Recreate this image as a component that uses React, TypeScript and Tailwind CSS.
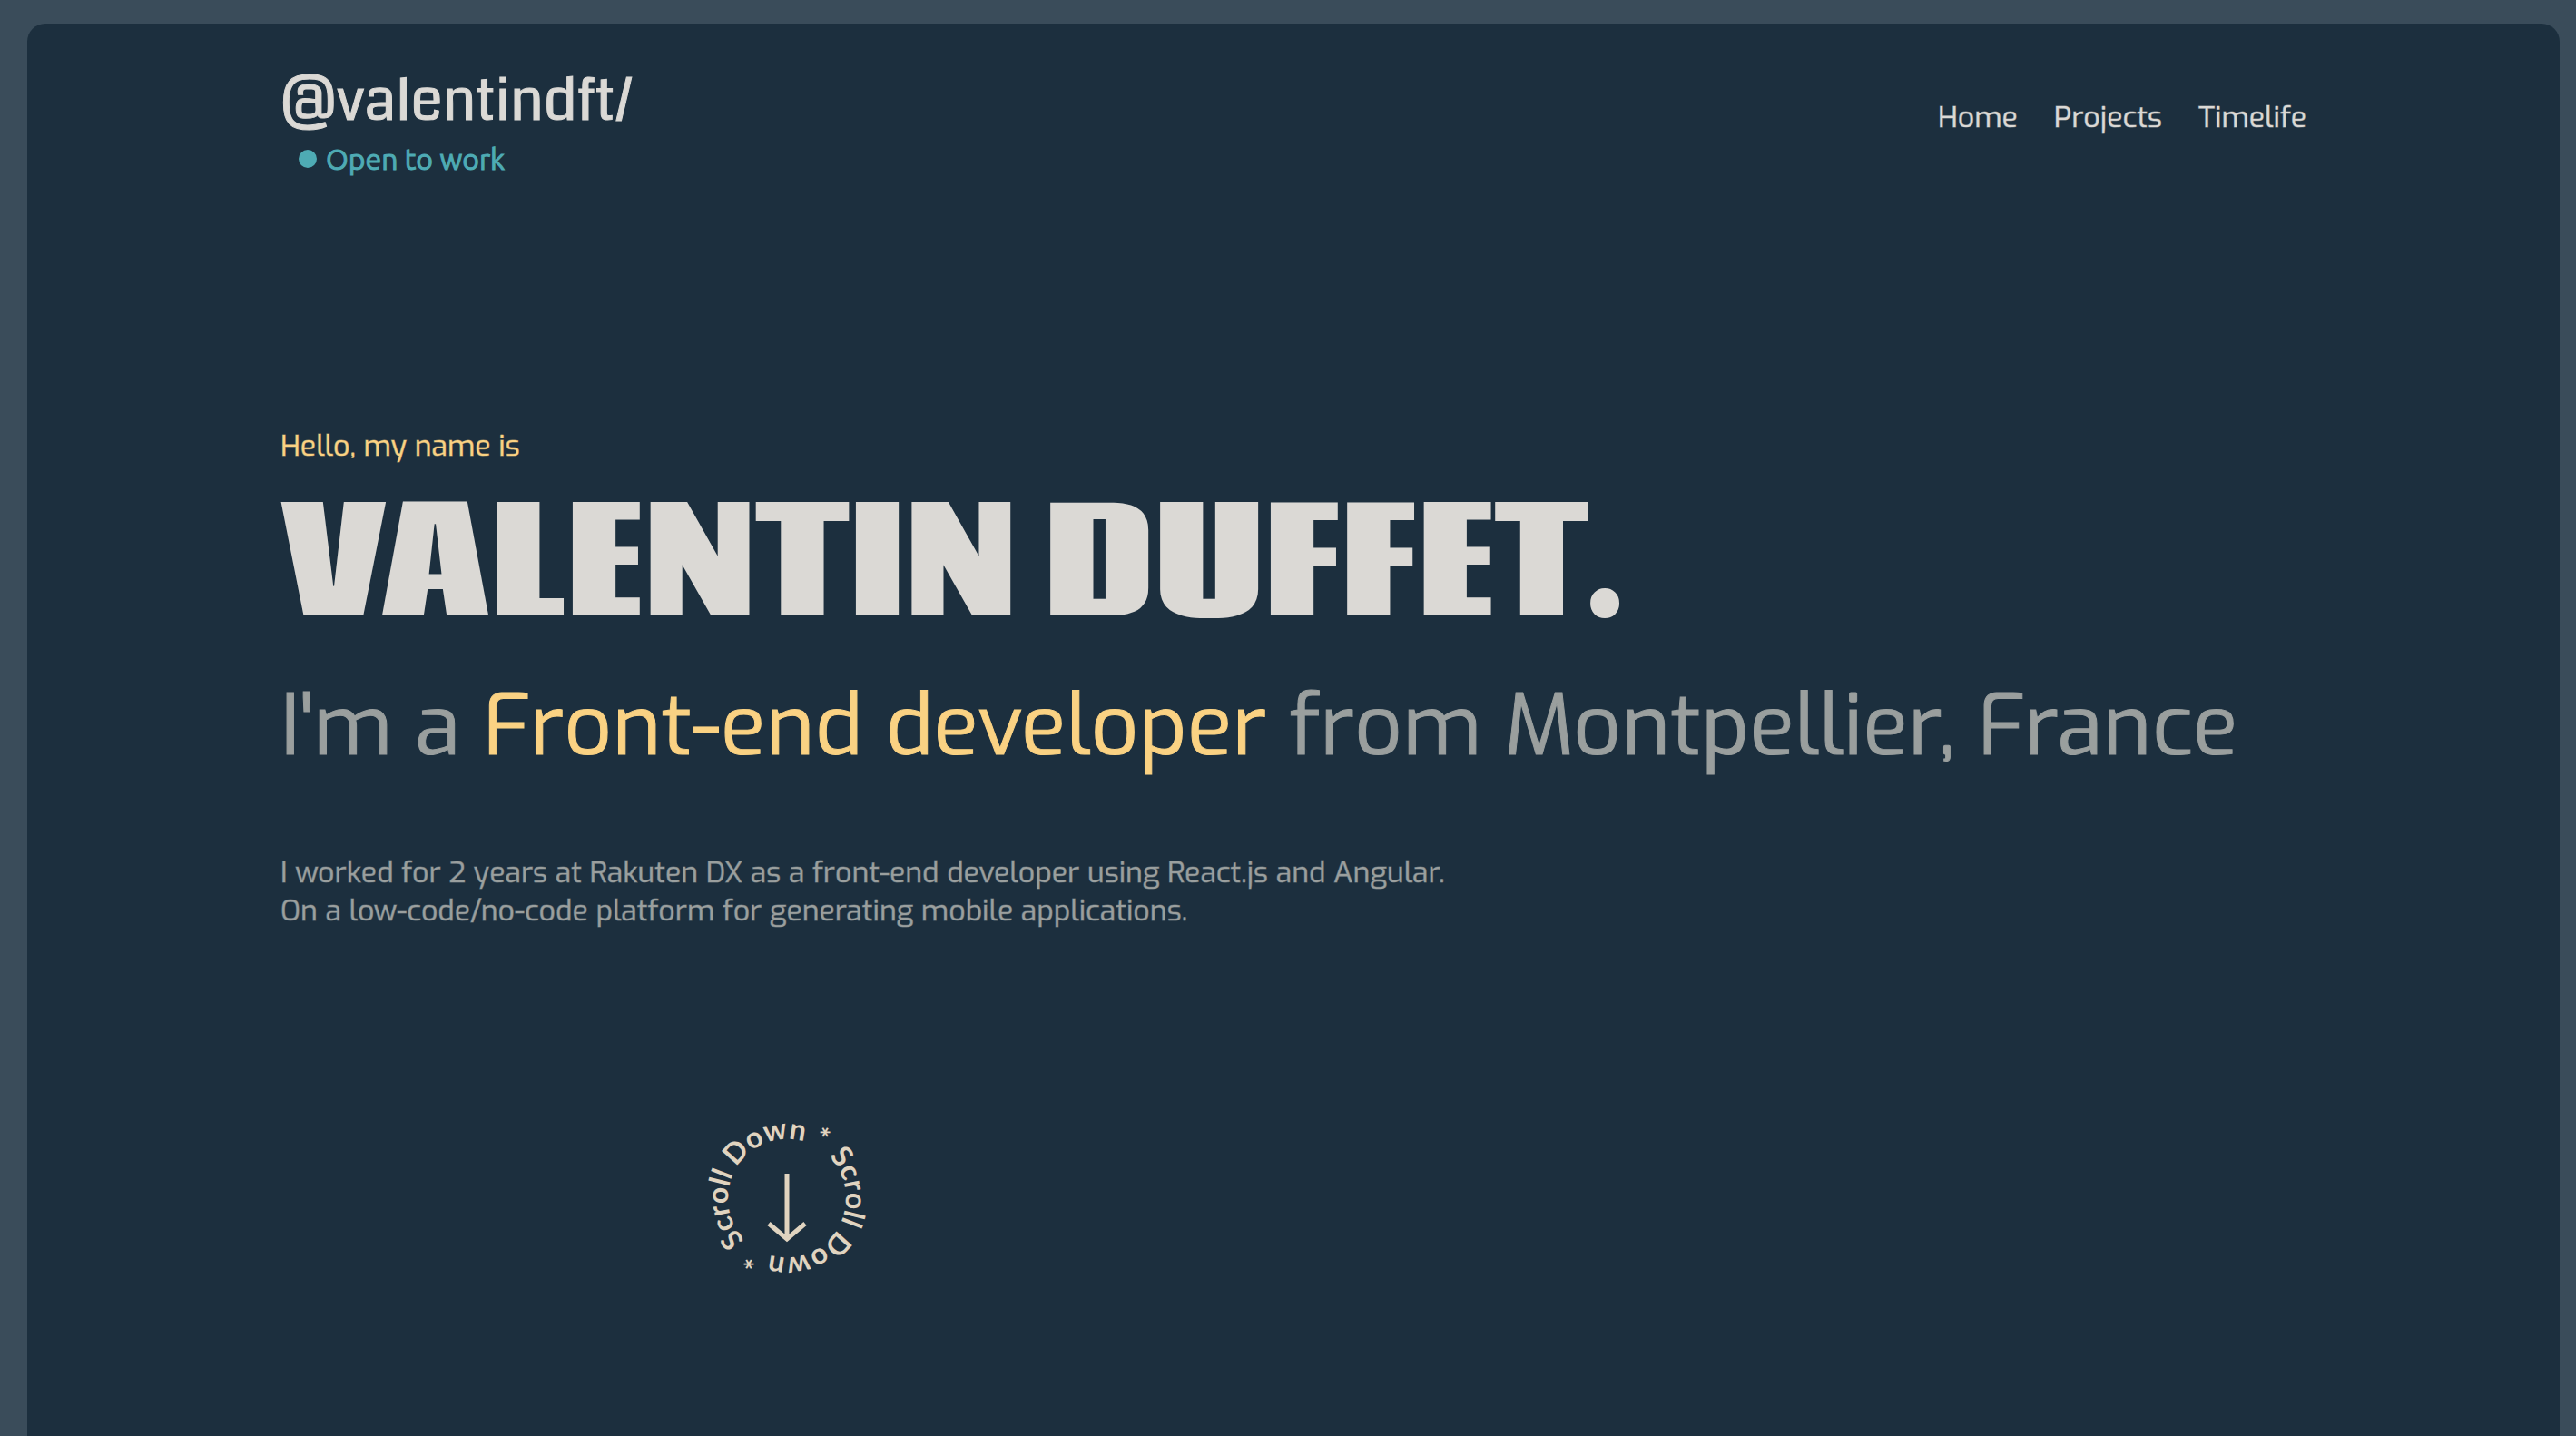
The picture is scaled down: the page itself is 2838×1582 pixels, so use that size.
const links = [
  { label: "Home", href: "#home" },
  { label: "Projects", href: "#projects" },
  { label: "Timelife", href: "#timelife" },
];

// Ring text runs clockwise; the second half is the first one turned upside down.
function ScrollDown() {
  return (
    <a href="#projects" aria-label="Scroll down" className="block text-[#e0d4c0]">
      <svg viewBox="0 0 200 200" className="size-[200px]">
        <defs>
          <path id="ring-top" d="M54 146A65 65 0 0 1 146 54A65 65 0 0 1 54 146" />
          <path id="ring-bottom" d="M146 54A65 65 0 0 1 54 146A65 65 0 0 1 146 54" />
        </defs>
        <g fill="currentColor" className="font-['Lato',sans-serif] text-[32px] font-bold">
          <text>
            <textPath href="#ring-top">Scroll Down *</textPath>
          </text>
          <text>
            <textPath href="#ring-bottom">Scroll Down *</textPath>
          </text>
        </g>
        <path d="M100 73V144M80 128L100 145L120 128" fill="none" stroke="currentColor" strokeWidth="5" />
      </svg>
    </a>
  );
}

export default function App() {
  return (
    <div className="flex min-h-screen flex-col bg-[#3a4c5a] pt-[26px] pr-[18px] pl-[30px] font-['Exo','Roboto',sans-serif] text-[32px] leading-[42px] text-[#dbd9d5] [-webkit-text-stroke-color:color-mix(in_srgb,currentColor_50%,transparent)] [-webkit-text-stroke-width:1px]">
      <div className="flex-1 rounded-t-[20px] bg-[#1c2f3e] px-[10%]">
        <header className="flex items-start justify-between pt-[46px]">
          <div className="[-webkit-text-stroke-color:currentColor]">
            <a href="#home" className="block font-['Coda','Roboto',sans-serif] text-[64px] leading-[80px]">
              @valentindft/
            </a>
            <p className="mt-[4px] flex items-center gap-[10px] pl-[20px] font-['Ubuntu','Open_Sans',sans-serif] leading-[38px] text-[#4eabb4]">
              <span className="size-[20px] rounded-full bg-[#4eabb4]" />
              Open to work
            </p>
          </div>
          <nav className="flex gap-[40px] pt-[36px]">
            {links.map((l) => (
              <a key={l.label} href={l.href}>
                {l.label}
              </a>
            ))}
          </nav>
        </header>
        <main className="pt-[276px]">
          <p className="text-[#fad283]">Hello, my name is</p>
          <h1 className="mt-[14px] font-['Coda','Roboto',sans-serif] text-[160px] leading-[200px] font-extrabold [-webkit-text-stroke-width:0]">
            VALENTIN DUFFET.
          </h1>
          <h2 className="mt-[14px] text-[92px] leading-[120px] text-[#9a9f9e] [-webkit-text-stroke-color:currentColor]">
            I'm a <span className="text-[#fad283] [-webkit-text-stroke-color:currentColor]">Front-end developer</span> from Montpellier, France
          </h2>
          <p className="mt-[80px] text-[#9a9f9e]">
            I worked for 2 years at Rakuten DX as a front-end developer using React.js and Angular.
            <br />
            On a low-code/no-code platform for generating mobile applications.
          </p>
          <div className="mt-[196px] flex w-1/2 justify-center [-webkit-text-stroke-width:0]">
            <ScrollDown />
          </div>
        </main>
      </div>
    </div>
  );
}
